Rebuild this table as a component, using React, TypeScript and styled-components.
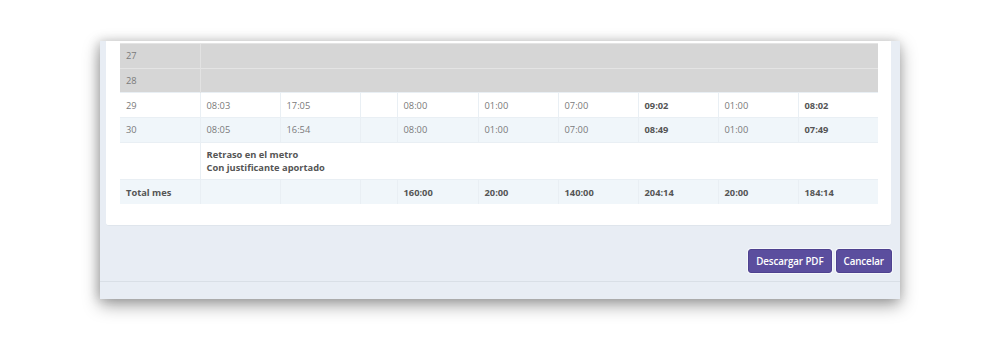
import React from "react";
import styled, { createGlobalStyle } from "styled-components";

const Global = createGlobalStyle`
  html, body { margin: 0; padding: 0; background: #ffffff; }
  body { font-family: "Open Sans", "Liberation Sans", sans-serif; }
`;

const Page = styled.div`
  width: 1000px;
  height: 344px;
  padding: 41px 0 0 100px;
  box-sizing: border-box;
  overflow: hidden;
`;

const Panel = styled.div`
  width: 800px;
  height: 258px;
  background: #e8edf4;
  box-shadow: 0 6px 16px rgba(0, 0, 0, 0.38), -2px 0 10px rgba(0, 0, 0, 0.15);
  display: flex;
  flex-direction: column;
`;

const Card = styled.div`
  margin: 0 9px 0 6px;
  background: #ffffff;
  padding: 2px 13px 21px 14px;
  border-bottom: 1px solid #dfe5ec;
  border-radius: 0 0 3px 3px;
`;

const Table = styled.table`
  width: 758px;
  border-collapse: collapse;
  table-layout: fixed;
  font-size: 9.3px;
  color: #777;
`;

const Row = styled.tr<{ $tone: "gray" | "white" | "blue" }>`
  background: ${(p) =>
    p.$tone === "gray" ? "#d6d6d6" : p.$tone === "blue" ? "#f0f6fa" : "#ffffff"};
  & > td {
    border-top: 1px solid ${(p) => (p.$tone === "gray" ? "#e4e4e4" : "#e9eff4")};
    border-left: 1px solid ${(p) => (p.$tone === "gray" ? "#e2e2e2" : "#e9eff4")};
  }
  & > td:first-child {
    border-left: none;
  }
`;

const Cell = styled.td<{ $bold?: boolean }>`
  height: 24.7px;
  padding: 0 6px;
  box-sizing: border-box;
  font-weight: ${(p) => (p.$bold ? 700 : 400)};
  color: ${(p) => (p.$bold ? "#555" : "#7a7a7a")};
  white-space: nowrap;
  vertical-align: middle;
`;

const NoteCell = styled.td`
  height: 37.5px;
  box-sizing: border-box;
  padding: 4px 6px 5px;
  font-weight: 700;
  color: #555;
  line-height: 13px;
  vertical-align: middle;
`;

const Footer = styled.div`
  flex: 1;
  display: flex;
  justify-content: flex-end;
  align-items: flex-start;
  gap: 4px;
  padding: 23px 8px 0 0;
  border-bottom: 1px solid #d9dfe6;
`;

const Button = styled.button`
  height: 24px;
  padding: 0 7px;
  border: 1px solid #4e4290;
  border-radius: 3px;
  background: #5b4e9e;
  color: #ffffff;
  font-family: "Open Sans", "Liberation Sans", sans-serif;
  font-size: 9.8px;
  font-weight: 600;
  letter-spacing: -0.1px;
  box-shadow: 0 0 0 1px rgba(255, 255, 255, 0.6);
`;

const BottomBar = styled.div`
  height: 17px;
`;

const cols = [80, 80, 80, 37, 81, 80, 80, 80, 80, 80];

type Day = { d: string; v: string[] };
const days: Day[] = [
  { d: "29", v: ["08:03", "17:05", "", "08:00", "01:00", "07:00", "09:02", "01:00", "08:02"] },
  { d: "30", v: ["08:05", "16:54", "", "08:00", "01:00", "07:00", "08:49", "01:00", "07:49"] },
];
const boldIdx = new Set([6, 8]);

export default function App() {
  return (
    <>
      <Global />
      <Page>
        <Panel>
          <Card>
            <Table>
              <colgroup>
                {cols.map((w, i) => (
                  <col key={i} style={{ width: w }} />
                ))}
              </colgroup>
              <tbody>
                {["27", "28"].map((d) => (
                  <Row key={d} $tone="gray">
                    <Cell>{d}</Cell>
                    <Cell colSpan={9} />
                  </Row>
                ))}
                {days.map((day, i) => (
                  <Row key={day.d} $tone={i === 0 ? "white" : "blue"}>
                    <Cell>{day.d}</Cell>
                    {day.v.map((v, j) => (
                      <Cell key={j} $bold={boldIdx.has(j)}>
                        {v}
                      </Cell>
                    ))}
                  </Row>
                ))}
                <Row $tone="white">
                  <Cell />
                  <NoteCell colSpan={9}>
                    Retraso en el metro
                    <br />
                    Con justificante aportado
                  </NoteCell>
                </Row>
                <Row $tone="blue">
                  <Cell $bold>Total mes</Cell>
                  <Cell />
                  <Cell />
                  <Cell />
                  {["160:00", "20:00", "140:00", "204:14", "20:00", "184:14"].map((v, i) => (
                    <Cell key={i} $bold>
                      {v}
                    </Cell>
                  ))}
                </Row>
              </tbody>
            </Table>
          </Card>
          <Footer>
            <Button>Descargar PDF</Button>
            <Button>Cancelar</Button>
          </Footer>
          <BottomBar />
        </Panel>
      </Page>
    </>
  );
}
